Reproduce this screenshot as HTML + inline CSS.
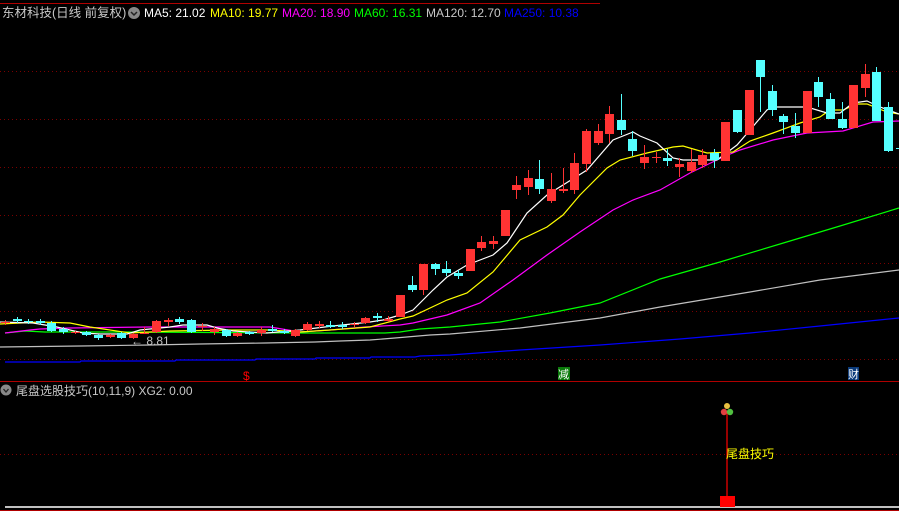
<!DOCTYPE html>
<html><head><meta charset="utf-8"><style>
html,body{margin:0;padding:0;background:#000;width:899px;height:511px;overflow:hidden}
svg{display:block}
text{font-family:"Liberation Sans","Noto Sans CJK SC",sans-serif}
</style></head><body>
<svg id="s" width="899" height="511" xmlns="http://www.w3.org/2000/svg">
<rect width="899" height="511" fill="#000"/>
<g stroke="#7a0000" stroke-dasharray="1,3" stroke-width="1">
<line x1="0" y1="71.5" x2="899" y2="71.5"/><line x1="0" y1="119.5" x2="899" y2="119.5"/>
<line x1="0" y1="167.5" x2="899" y2="167.5"/><line x1="0" y1="215.5" x2="899" y2="215.5"/>
<line x1="0" y1="263.5" x2="899" y2="263.5"/><line x1="0" y1="311.5" x2="899" y2="311.5"/>
<line x1="0" y1="359.5" x2="899" y2="359.5"/><line x1="0" y1="454.5" x2="899" y2="454.5"/>
</g>
<line x1="0" y1="3.5" x2="600" y2="3.5" stroke="#b00000"/>
<line x1="0" y1="381.5" x2="899" y2="381.5" stroke="#b00000"/>
<line x1="0" y1="510.5" x2="899" y2="510.5" stroke="#b00000"/>
<g id="ma" fill="none" stroke-width="1.2"></g>
<g id="cd"></g>
<text x="2" y="17" font-size="12.5" fill="#c8c8c8">东材科技(日线 前复权)</text>
<circle cx="134" cy="13" r="6" fill="#888"/><path d="M131 12 L134 15 L137 12" stroke="#222" stroke-width="1.5" fill="none"/>
<text x="144" y="17" font-size="12" fill="#fff">MA5: 21.02</text>
<text x="210" y="17" font-size="12" fill="#ff0">MA10: 19.77</text>
<text x="282" y="17" font-size="12" fill="#f0f">MA20: 18.90</text>
<text x="354" y="17" font-size="12" fill="#0f0">MA60: 16.31</text>
<text x="426" y="17" font-size="12" fill="#c8c8c8">MA120: 12.70</text>
<text x="504" y="17" font-size="12" fill="#00f">MA250: 10.38</text>
<text x="131" y="345" font-size="12" fill="#c0c0c0">← 8.81</text>
<text x="243" y="380" font-size="12" fill="#f00">$</text>
<rect x="558" y="367" width="12" height="13" fill="#0a7a0a"/><text x="558" y="378" font-size="11" fill="#fff">减</text>
<rect x="848" y="367" width="11" height="13" fill="#0a3a7a"/><text x="848" y="378" font-size="11" fill="#fff">财</text>
<circle cx="6" cy="390" r="5.5" fill="#888"/><path d="M3.5 389 L6 392 L8.5 389" stroke="#222" stroke-width="1.3" fill="none"/>
<text x="16" y="395" font-size="12" fill="#c8c8c8">尾盘选股技巧(10,11,9) XG2: 0.00</text>
<line x1="727" y1="413" x2="727" y2="497" stroke="#f00" stroke-width="1.2"/>
<circle cx="727" cy="406" r="3" fill="#e8c040"/><circle cx="724" cy="412" r="3.2" fill="#e04040"/><circle cx="730" cy="412" r="3.2" fill="#50c040"/>
<text x="726" y="458" font-size="12" fill="#ff0">尾盘技巧</text>
<line x1="5" y1="507" x2="899" y2="507" stroke="#fff" stroke-width="1.5"/>
<rect x="720" y="496" width="15" height="11" fill="#f00"/>
</svg>
<script>
var NS="http://www.w3.org/2000/svg";
function el(p,t,a){var e=document.createElementNS(NS,t);for(var k in a)e.setAttribute(k,a[k]);p.appendChild(e);return e;}
var C=[
['r',322,323,320,325],['c',319,321,317,323],['c',321,322,319,324],['c',321,323,319,325],['c',323,331,321,332],['c',329,332,327,334],['r',332,333,331,334],['c',332,335,331,336],['c',335,338,334,340],['r',335,337,334,338],['c',333,338,332,339],['r',334,338,333,339],['r',333,334,327,334],['r',321,332,320,333],['r',320,322,318,326],['c',319,322,317,324],['c',320,332,319,333],['r',326,327,323,331],['r',329,332,327,335],['c',330,336,329,337],['r',333,336,332,337],['c',332,334,331,335],['r',330,333,327,336],['c',329,331,325,332],['c',331,333,329,334],['r',330,336,329,337],['r',324,330,322,331],['r',324,326,321,328],['c',325,327,321,328],['c',325,327,322,329],['r',324,325,322,327],['r',318,323,317,324],['c',316,318,313,322],['r',319,321,316,322],
['r',295,317,295,317],['c',285,290,276,292],['r',264,290,264,295],['c',264,269,263,275],['c',269,273,261,276],['c',273,276,270,279],['r',249,271,249,271],['r',242,248,236,251],['r',241,244,236,249],['r',210,236,210,236],['r',185,190,176,199],['r',178,187,170,195],['c',179,189,160,194],['r',189,201,173,203],['r',189,191,168,193],['r',163,190,153,194],['r',131,164,129,172],['r',131,143,124,145],['r',114,134,106,143],['c',120,130,94,135],['c',139,151,131,156],['r',157,163,145,169],['r',157,158,152,163],['c',158,161,149,166],['r',164,167,158,177],['r',162,171,149,173],['r',155,165,149,168],['c',153,160,149,168],['r',122,161,122,161],['c',110,132,110,133],['r',90,135,90,135],['c',60,77,60,112],['c',91,110,85,116],['c',116,122,114,134],['c',126,133,113,138],['r',91,133,91,133],['c',82,97,77,107],['c',99,119,93,119],['c',119,128,102,129],['r',85,128,85,128],['r',74,88,64,97],['c',72,121,67,121],['c',107,151,102,152],['c',148,149,148,149]];
var cd=document.getElementById('cd');
C.forEach(function(d,i){var x=Math.round(400+11.62*(i-34));var col=d[0]=='r'?'#ff3333':'#55ffff';
el(cd,'line',{x1:x+0.5,y1:d[3],x2:x+0.5,y2:d[4],stroke:col,'stroke-width':1});
var h=Math.max(1,d[2]-d[1]);el(cd,'rect',{x:x-4,y:d[1],width:9,height:h,fill:col});});
var M={
'#c0c0c0':[[0,347],[80,346],[150,345],[200,344],[265,343],[315,342],[340,341],[370,340],[395,338],[430,335],[450,334],[520,328],[600,318],[660,307],[750,292],[820,280],[899,270]],
'#0000ff':[[5,362],[80,362],[81,361],[175,361],[176,360],[255,360],[256,359],[315,359],[316,358],[370,358],[371,357],[415,357],[420,356],[450,355],[520,350],[600,345],[680,339],[750,333],[820,326],[899,318]],
'#00ff00':[[5,333],[25,331],[45,332],[130,332],[300,333],[385,333],[400,332],[420,329],[450,327],[500,322],[550,313],[600,303],[660,279],[720,262],[780,244],[840,226],[899,208]],
'#ff00ff':[[5,333],[30,330],[40,329],[70,328],[150,327],[270,327],[300,332],[330,330],[365,327],[400,325],[413,323],[447,315],[480,303],[513,280],[547,255],[580,232],[613,210],[633,200],[660,190],[690,173],[723,157],[740,150],[773,140],[807,133],[843,131],[873,122],[899,121]],
'#ffff00':[[0,324],[40,322],[70,323],[90,327],[130,333],[170,331],[230,330],[270,330],[300,332],[330,330],[370,327],[400,319],[413,316],[447,300],[467,293],[493,272],[520,240],[547,227],[563,215],[580,195],[607,168],[620,160],[647,153],[673,147],[683,146],[707,153],[733,152],[750,141],[773,133],[800,123],[820,117],[830,110],[843,110],[857,104],[867,104],[887,112],[899,114]],
'#ffffff':[[0,322],[33,323],[57,327],[83,333],[100,334],[127,334],[140,330],[170,327],[183,325],[207,325],[217,328],[233,331],[267,333],[300,330],[333,326],[370,322],[383,320],[400,315],[413,310],[433,290],[447,277],[467,265],[493,255],[507,243],[527,213],[547,195],[587,170],[613,140],[633,132],[640,136],[657,143],[673,158],[683,160],[717,160],[737,145],[750,130],[767,110],[773,107],[807,107],[827,113],[840,113],[853,103],[867,101],[880,107],[899,114]]};
var ma=document.getElementById('ma');
for(var c in M){el(ma,'polyline',{points:M[c].map(function(p){return p.join(',')}).join(' '),stroke:c});}
</script>
</body></html>
